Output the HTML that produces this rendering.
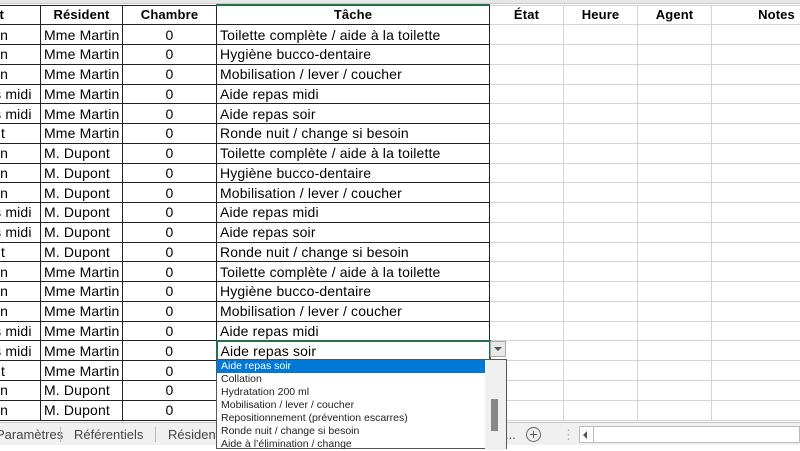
<!DOCTYPE html>
<html><head><meta charset="utf-8"><style>
*{margin:0;padding:0;box-sizing:border-box}
body{width:800px;height:445px;overflow:hidden;background:#fff;font-family:"Liberation Sans",Arial,sans-serif;position:relative}
.top{position:absolute;left:0;top:0;width:800px;height:4px;background:#e6e6e6;border-bottom:1px solid #ccc}
table{position:absolute;left:-40px;top:4px;border-collapse:collapse;table-layout:fixed;width:881px}
td{height:19.75px;font-size:14px;letter-spacing:0.15px;color:#000;white-space:nowrap;overflow:hidden;padding:0 3px;border:1px solid #222;line-height:18px}
td.l{border:1px solid #d4d4d4}
tr.h td{font-weight:bold;text-align:center;font-size:13px}
td.c{text-align:center}
td.m{text-align:right;padding-right:32px}
td.a{text-align:right;padding-right:10px}
td.n{text-align:right;padding-right:35px}
tr.h td.hd{text-align:right;padding-right:36px}
.tabs{position:absolute;left:0;top:422px;width:800px;height:23px;background:#f0f0f0;border-top:1px solid #c8c8c8;font-size:13px;color:#444}
.tabs span{position:absolute;top:4px}
.sep{position:absolute;top:4px;width:1px;height:15px;background:#bbb}
.dd{position:absolute;left:216px;top:359px;width:291px;height:90px;background:#fff;border:1px solid #555;font-size:10.5px;color:#222;line-height:13px}
.dd .it{padding-left:4px;width:268px}
.dd .sel{background:#0078d7;color:#fff}
.sb{position:absolute;left:268px;top:0;width:21px;height:90px;background:#f0f0f0}
.th{position:absolute;left:6px;top:39px;width:7px;height:32px;background:#888}
</style></head><body>
<div class="top"></div>
<table>
<colgroup><col style="width:80px"><col style="width:82px"><col style="width:94px"><col style="width:273px"><col style="width:74px"><col style="width:74px"><col style="width:74px"><col style="width:130px"></colgroup>
<tr class="h"><td class="hd">Début</td><td>Résident</td><td>Chambre</td><td style="border-top:2px solid #217346">Tâche</td><td class="l">État</td><td class="l">Heure</td><td class="l">Agent</td><td class="l">Notes</td></tr>
<tr><td class="m">Matin</td><td>Mme Martin</td><td class="c">0</td><td>Toilette complète / aide à la toilette</td><td class="l"></td><td class="l"></td><td class="l"></td><td class="l"></td></tr>
<tr><td class="m">Matin</td><td>Mme Martin</td><td class="c">0</td><td>Hygiène bucco-dentaire</td><td class="l"></td><td class="l"></td><td class="l"></td><td class="l"></td></tr>
<tr><td class="m">Matin</td><td>Mme Martin</td><td class="c">0</td><td>Mobilisation / lever / coucher</td><td class="l"></td><td class="l"></td><td class="l"></td><td class="l"></td></tr>
<tr><td class="a">Après midi</td><td>Mme Martin</td><td class="c">0</td><td>Aide repas midi</td><td class="l"></td><td class="l"></td><td class="l"></td><td class="l"></td></tr>
<tr><td class="a">Après midi</td><td>Mme Martin</td><td class="c">0</td><td>Aide repas soir</td><td class="l"></td><td class="l"></td><td class="l"></td><td class="l"></td></tr>
<tr><td class="n">Nuit</td><td>Mme Martin</td><td class="c">0</td><td>Ronde nuit / change si besoin</td><td class="l"></td><td class="l"></td><td class="l"></td><td class="l"></td></tr>
<tr><td class="m">Matin</td><td>M. Dupont</td><td class="c">0</td><td>Toilette complète / aide à la toilette</td><td class="l"></td><td class="l"></td><td class="l"></td><td class="l"></td></tr>
<tr><td class="m">Matin</td><td>M. Dupont</td><td class="c">0</td><td>Hygiène bucco-dentaire</td><td class="l"></td><td class="l"></td><td class="l"></td><td class="l"></td></tr>
<tr><td class="m">Matin</td><td>M. Dupont</td><td class="c">0</td><td>Mobilisation / lever / coucher</td><td class="l"></td><td class="l"></td><td class="l"></td><td class="l"></td></tr>
<tr><td class="a">Après midi</td><td>M. Dupont</td><td class="c">0</td><td>Aide repas midi</td><td class="l"></td><td class="l"></td><td class="l"></td><td class="l"></td></tr>
<tr><td class="a">Après midi</td><td>M. Dupont</td><td class="c">0</td><td>Aide repas soir</td><td class="l"></td><td class="l"></td><td class="l"></td><td class="l"></td></tr>
<tr><td class="n">Nuit</td><td>M. Dupont</td><td class="c">0</td><td>Ronde nuit / change si besoin</td><td class="l"></td><td class="l"></td><td class="l"></td><td class="l"></td></tr>
<tr><td class="m">Matin</td><td>Mme Martin</td><td class="c">0</td><td>Toilette complète / aide à la toilette</td><td class="l"></td><td class="l"></td><td class="l"></td><td class="l"></td></tr>
<tr><td class="m">Matin</td><td>Mme Martin</td><td class="c">0</td><td>Hygiène bucco-dentaire</td><td class="l"></td><td class="l"></td><td class="l"></td><td class="l"></td></tr>
<tr><td class="m">Matin</td><td>Mme Martin</td><td class="c">0</td><td>Mobilisation / lever / coucher</td><td class="l"></td><td class="l"></td><td class="l"></td><td class="l"></td></tr>
<tr><td class="a">Après midi</td><td>Mme Martin</td><td class="c">0</td><td>Aide repas midi</td><td class="l"></td><td class="l"></td><td class="l"></td><td class="l"></td></tr>
<tr><td class="a">Après midi</td><td>Mme Martin</td><td class="c">0</td><td style="border:2px solid #217346">Aide repas soir</td><td class="l"></td><td class="l"></td><td class="l"></td><td class="l"></td></tr>
<tr><td class="n">Nuit</td><td>Mme Martin</td><td class="c">0</td><td></td><td class="l"></td><td class="l"></td><td class="l"></td><td class="l"></td></tr>
<tr><td class="m">Matin</td><td>M. Dupont</td><td class="c">0</td><td></td><td class="l"></td><td class="l"></td><td class="l"></td><td class="l"></td></tr>
<tr><td class="m">Matin</td><td>M. Dupont</td><td class="c">0</td><td></td><td class="l"></td><td class="l"></td><td class="l"></td><td class="l"></td></tr>
</table>
<div style="position:absolute;left:490px;top:341px;width:16px;height:16px;background:#e8e8e8;border:1px solid #aaa"><div style="position:absolute;left:3px;top:5px;border-left:4px solid transparent;border-right:4px solid transparent;border-top:4px solid #555"></div></div>
<div class="tabs">
<span style="left:-4px">Paramètres</span><div class="sep" style="left:60px"></div>
<span style="left:74px">Référentiels</span><div class="sep" style="left:155px"></div>
<span style="left:168px">Résident</span>
<span style="left:505px;color:#217346">...</span>
<div style="position:absolute;left:526px;top:4px;width:15px;height:15px;border:1px solid #666;border-radius:50%;text-align:center;line-height:12px;font-size:14px;color:#555">+</div>
<span style="left:562px;color:#aaa">⋮</span>
<div style="position:absolute;left:579px;top:3px;width:221px;height:17px;background:#fff;border:1px solid #bbb"></div>
<div style="position:absolute;left:583px;top:8px;border-top:4px solid transparent;border-bottom:4px solid transparent;border-right:4px solid #555"></div>
<div style="position:absolute;left:593px;top:3px;width:1px;height:17px;background:#bbb"></div>
</div>
<div class="dd">
<div class="it sel">Aide repas soir</div>
<div class="it">Collation</div>
<div class="it">Hydratation 200 ml</div>
<div class="it">Mobilisation / lever / coucher</div>
<div class="it">Repositionnement (prévention escarres)</div>
<div class="it">Ronde nuit / change si besoin</div>
<div class="it">Aide à l’élimination / change</div>
<div class="sb"><div class="th"></div></div>
</div>
</body></html>
